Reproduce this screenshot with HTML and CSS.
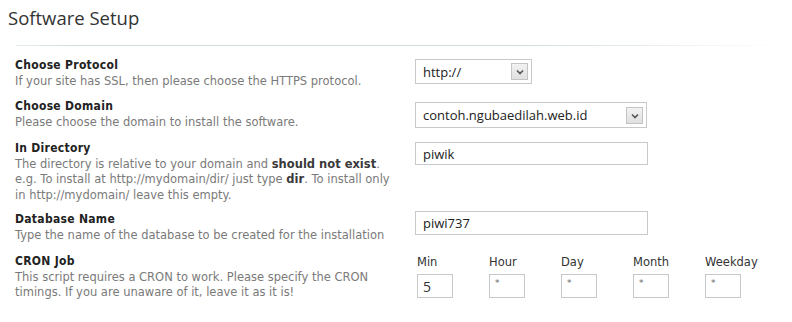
FILE: index.html
```html
<!DOCTYPE html>
<html>
<head>
<meta charset="utf-8">
<link rel="stylesheet" href="styles.css">
</head>
<body>
<div class="page">
  <h1 class="title">Software Setup</h1>
  <div class="rule"></div>
  <div class="form">
    <div class="row r1">
      <div class="info">
        <div class="label">Choose Protocol</div>
        <div class="desc">If your site has SSL, then please choose the HTTPS protocol.</div>
      </div>
      <div class="field">
        <div class="select sel-proto">
          <select><option>http://</option></select>
          <span class="arrow"><svg width="8" height="6" viewBox="0 0 8 6"><path d="M1 1.5 L4 4.5 L7 1.5" fill="none" stroke="#555" stroke-width="1.6"/></svg></span>
        </div>
      </div>
    </div>
    <div class="row r2">
      <div class="info">
        <div class="label">Choose Domain</div>
        <div class="desc">Please choose the domain to install the software.</div>
      </div>
      <div class="field">
        <div class="select sel-domain">
          <select><option>contoh.ngubaedilah.web.id</option></select>
          <span class="arrow"><svg width="8" height="6" viewBox="0 0 8 6"><path d="M1 1.5 L4 4.5 L7 1.5" fill="none" stroke="#555" stroke-width="1.6"/></svg></span>
        </div>
      </div>
    </div>
    <div class="row r3">
      <div class="info">
        <div class="label">In Directory</div>
        <div class="desc">The directory is relative to your domain and <b>should not exist</b>. e.g. To install at http://mydomain/dir/ just type <b>dir</b>. To install only in http://mydomain/ leave this empty.</div>
      </div>
      <div class="field">
        <input class="text" type="text" value="piwik">
      </div>
    </div>
    <div class="row r4">
      <div class="info">
        <div class="label">Database Name</div>
        <div class="desc">Type the name of the database to be created for the installation</div>
      </div>
      <div class="field">
        <input class="text" type="text" value="piwi737">
      </div>
    </div>
    <div class="row r5">
      <div class="info">
        <div class="label">CRON Job</div>
        <div class="desc">This script requires a CRON to work. Please specify the CRON timings. If you are unaware of it, leave it as it is!</div>
      </div>
      <div class="field cron">
        <div class="cron-col"><div class="cron-label">Min</div><input class="cron-input" type="text" value="5"></div>
        <div class="cron-col"><div class="cron-label">Hour</div><input class="cron-input star" type="text" value="*"></div>
        <div class="cron-col"><div class="cron-label">Day</div><input class="cron-input star" type="text" value="*"></div>
        <div class="cron-col"><div class="cron-label">Month</div><input class="cron-input star" type="text" value="*"></div>
        <div class="cron-col"><div class="cron-label">Weekday</div><input class="cron-input star" type="text" value="*"></div>
      </div>
    </div>
  </div>
</div>
</body>
</html>
```
FILE: styles.css
```css
html, body {
  margin: 0;
  padding: 0;
  background: #fff;
}
.page {
  font-family: "DejaVu Sans", Verdana, sans-serif;
  font-size: 11.5px;
  color: #333;
}
.title {
  margin: 0;
  padding: 5px 0 0 8px;
  font-family: "Open Sans", sans-serif;
  font-weight: normal;
  font-size: 18.5px;
  line-height: 26px;
  color: #333;
}
.rule {
  margin: 14px 12px 0 16px;
  height: 1px;
  background: linear-gradient(to right, #e6eeee 0%, #cfdcdc 8%, #cfdcdc 65%, rgba(207,220,220,0) 100%);
}
.form {
  padding: 12px 0 0 15px;
}
.row {
  display: grid;
  grid-template-columns: 400px 1fr;
}
.r2 { margin-top: 10px; }
.r3 { margin-top: 11px; }
.r4 { margin-top: 9px; }
.r5 { margin-top: 11px; }
.info {
  max-width: 381px;
}
.label {
  font-family: "DejaVu Sans Condensed", "DejaVu Sans", sans-serif;
  font-weight: bold;
  font-size: 12px;
  letter-spacing: 0.3px;
  line-height: 15.5px;
  color: #222;
}
.desc {
  line-height: 15.5px;
  color: #7a7a7a;
}
.desc b {
  color: #3a3a3a;
}
.field {
  padding-top: 1px;
}
.r2 .field { padding-top: 3px; }
.r3 .field { padding-top: 1px; }
.r4 .field { padding-top: 0; margin-top: -1px; }
.select {
  position: relative;
  display: inline-block;
}
.select select {
  appearance: none;
  -webkit-appearance: none;
  margin: 0;
  border: 1px solid #c9c9c9;
  border-radius: 0;
  background: #fff;
  font-family: "Open Sans", sans-serif;
  font-size: 13px;
  color: #222;
  height: 25px;
  padding: 0 0 0 7px;
  outline: none;
}
.sel-proto select { width: 117px; }
.sel-domain select { width: 232px; height: 26px; }
.arrow {
  position: absolute;
  right: 4px;
  top: 4px;
  width: 15px;
  height: 15px;
  border: 1px solid #c4c4c4;
  background: linear-gradient(#f2f2f2, #e0e0e0);
  display: flex;
  align-items: center;
  justify-content: center;
  pointer-events: none;
}
.sel-domain .arrow { top: 5px; }
.text {
  display: block;
  box-sizing: border-box;
  margin: 0;
  width: 233px;
  height: 24px;
  border: 1px solid #c9c9c9;
  padding: 0 0 0 7px;
  font-family: "Open Sans", sans-serif;
  font-size: 13px;
  color: #222;
  outline: none;
}
.r3 .text { height: 23px; }
.cron {
  display: flex;
  gap: 36px;
  padding-top: 0;
  padding-left: 2px;
}
.cron-col {
  display: flex;
  flex-direction: column;
}
.cron-label {
  line-height: 16px;
  height: 20px;
  color: #333;
}
.cron-input {
  box-sizing: border-box;
  width: 36px;
  height: 24px;
  margin: 0;
  border: 1px solid #c9c9c9;
  padding: 0 0 0 5px;
  font-family: "Open Sans", sans-serif;
  font-size: 14px;
  color: #333;
  outline: none;
}
.cron-input.star {
  font-family: "DejaVu Sans", sans-serif;
  font-size: 9px;
  color: #666;
  padding: 0 0 7px 5px;
}
```
